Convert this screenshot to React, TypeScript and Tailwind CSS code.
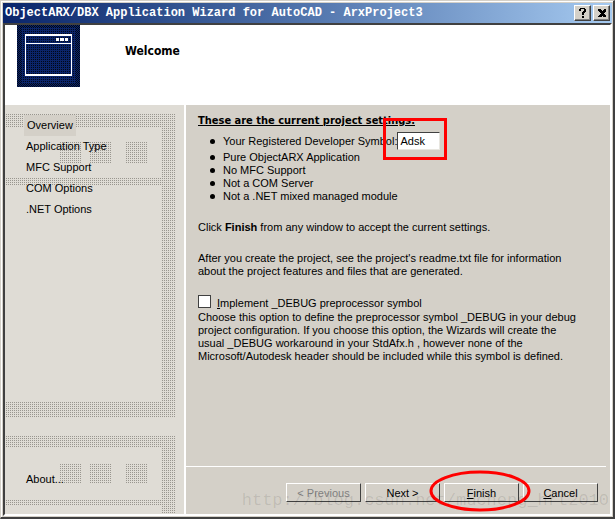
import * as React from 'react'

const NAV_ITEMS = ['Overview', 'Application Type', 'MFC Support', 'COM Options', '.NET Options']

const SETTINGS = [
  'Pure ObjectARX Application',
  'No MFC Support',
  'Not a COM Server',
  'Not a .NET mixed managed module',
]

const BUTTON = 'h-[19px] w-[75px] border border-t-white border-l-white border-r-[#404040] border-b-[#404040] bg-[#d4d0c8] text-center leading-4'
const CAPTION_BUTTON = 'flex h-4 w-[17px] items-center justify-center border border-t-white border-l-white border-r-[#404040] border-b-[#404040] bg-[#d4d0c8] text-black shadow-[inset_-1px_-1px_0_#808080]'

// Dotted window outlines behind the navigation
function DottedBackdrop() {
  return (
    <svg className="absolute inset-0 h-full w-full" aria-hidden="true">
      <defs>
        <pattern id="dots" width="2" height="2" patternUnits="userSpaceOnUse">
          <rect x="1" y="1" width="1" height="1" fill="#99968f" />
        </pattern>
      </defs>
      <g fill="url(#dots)">
        <rect x="1" y="9" width="170" height="13" />
        <rect x="1" y="73" width="156" height="8" />
        <rect x="157" y="22" width="14" height="283" />
        <rect x="55" y="37" width="21" height="21" />
        <rect x="85" y="37" width="21" height="21" />
        <rect x="121" y="37" width="21" height="21" />
        <rect x="1" y="297" width="170" height="15" />
        <rect x="1" y="330" width="170" height="13" />
        <rect x="157" y="343" width="14" height="66" />
        <rect x="55" y="358" width="21" height="21" />
        <rect x="85" y="358" width="21" height="21" />
        <rect x="121" y="358" width="21" height="21" />
        <rect x="1" y="394" width="156" height="7" />
        <rect x="178" y="9" width="2" height="13" />
        <rect x="178" y="73" width="2" height="8" />
        <rect x="178" y="297" width="2" height="15" />
        <rect x="178" y="330" width="2" height="13" />
        <rect x="178" y="394" width="2" height="7" />
      </g>
    </svg>
  )
}

function TitleBar() {
  return (
    <div className="flex h-5 items-center gap-0.5 bg-linear-to-r from-[#0a246a] to-[#a6caf0] pr-0.5 pl-0.5">
      <h1 className="flex-1 font-['Liberation_Mono',monospace] text-xs leading-5 font-bold whitespace-nowrap text-white">
        ObjectARX/DBX Application Wizard for AutoCAD - ArxProject3
      </h1>
      <button type="button" aria-label="Help" className={CAPTION_BUTTON}>
        <svg width="7" height="10" viewBox="0 0 7 10" shapeRendering="crispEdges">
          <path d="M1 0h5v1h1v3h-1v1h-1v2h-2v-3h1v-1h1v-2h-3v2h-2v-2h1zM3 8h2v2h-2z" />
        </svg>
      </button>
      <button type="button" aria-label="Close" className={CAPTION_BUTTON}>
        <svg width="8" height="8" viewBox="0 0 8 8" shapeRendering="crispEdges">
          <path d="M0 0h2v1h1v1h2v-1h1v-1h2v1h-1v1h-1v1h-1v2h1v1h1v1h1v1h-2v-1h-1v-1h-2v1h-1v1h-2v-1h1v-1h1v-1h1v-2h-1v-1h-1v-1h-1z" stroke="#000" strokeWidth="1" />
        </svg>
      </button>
    </div>
  )
}

function WizardLogo() {
  return (
    <svg width="63" height="62" viewBox="0 0 63 62" shapeRendering="crispEdges" aria-hidden="true">
      <defs>
        <pattern id="edge" width="2" height="2" patternUnits="userSpaceOnUse">
          <rect width="2" height="2" fill="#0a246a" />
          <path d="M0 0h1v1h-1zM1 1h1v1h-1z" fill="#020817" />
        </pattern>
        <pattern id="fill" width="2" height="2" patternUnits="userSpaceOnUse">
          <rect width="2" height="2" fill="#0a246a" />
          <path d="M0 0h1v1h-1z" fill="#020817" />
        </pattern>
      </defs>
      <rect width="63" height="62" fill="url(#edge)" />
      <rect x="4" y="3" width="55" height="55" fill="url(#fill)" />
      <path d="M8 9h47v42h-47zM9 11v7h45v-7zM9 19v30h45v-30z" fill="#fff" fillRule="evenodd" />
      <path d="M39 13h3v3h-3zM43 13h4v3h-4zM48 13h3v3h-3z" fill="#fff" />
    </svg>
  )
}

export default function App() {
  const [page, setPage] = React.useState('Overview')
  const [symbol, setSymbol] = React.useState('Adsk')
  const [debug, setDebug] = React.useState(false)

  return (
    <div className="relative flex min-h-screen flex-col border-t border-r-2 border-b-2 border-l border-t-[#d4d0c8] border-r-[#404040] border-b-[#404040] border-l-[#d4d0c8] bg-[#d4d0c8] font-['Liberation_Sans',Arial,sans-serif] text-[11px] leading-[13px] text-black">
      <div className="flex flex-1 flex-col border-t border-l border-white p-px">
        <TitleBar />
        <div className="flex flex-1 flex-col border-2 border-t-[#404040] border-r-white border-b-white border-l-[#404040]">
          <header className="flex h-20 bg-white pl-3">
            <WizardLogo />
            <h2 className="pt-[18px] pl-[45px] font-['DejaVu_Sans_Condensed','DejaVu_Sans',sans-serif] text-xs leading-4 font-bold">
              Welcome
            </h2>
          </header>

          <div className="flex flex-1">
            <nav className="relative flex w-[181px] shrink-0 flex-col border-r-2 border-white bg-[#dfdcd5]">
              <DottedBackdrop />
              <div className="relative flex flex-1 flex-col items-start pt-[10px] pl-[19px]">
                {NAV_ITEMS.map((item) => (
                  <button
                    key={item}
                    type="button"
                    onClick={() => setPage(item)}
                    className={`h-[21px] ${page === item ? 'bg-[#d4d0c8] px-[3px]' : 'px-0.5'}`}
                  >
                    {item}
                  </button>
                ))}
                <button type="button" className="mt-auto mb-7 px-0.5">About...</button>
              </div>
            </nav>

            <div className="flex flex-1 flex-col">
              <main className="flex-1 pt-[9px] pr-7 pl-3">
                <h3 className="font-['DejaVu_Sans_Condensed','DejaVu_Sans',sans-serif] leading-[14px] font-bold underline">
                  These are the current project settings.
                </h3>
                <ul className="pt-1">
                  <li className="flex items-center pb-px">
                    <span className="mr-2 ml-3 size-[5px] rounded-full bg-black" />
                    <label htmlFor="symbol">Your Registered Developer Symbol:</label>
                    <span className="relative flex">
                      <input
                        id="symbol"
                        value={symbol}
                        onChange={(e) => setSymbol(e.target.value)}
                        className="h-[18px] w-[43px] border border-t-[#404040] border-r-[#e8e6e0] border-b-[#e8e6e0] border-l-[#404040] bg-white px-0.5"
                      />
                      <span className="pointer-events-none absolute -top-3.5 -right-[7px] -bottom-2.5 -left-3.5 border-3 border-[#f00]" />
                    </span>
                  </li>
                  {SETTINGS.map((s) => (
                    <li key={s} className="flex items-center">
                      <span className="mr-2 ml-3 size-[5px] rounded-full bg-black" />
                      {s}
                    </li>
                  ))}
                </ul>
                <p className="pt-[18px]">
                  Click <b>Finish</b> from any window to accept the current settings.
                </p>
                <p className="pt-[18px]">
                  After you create the project, see the project's readme.txt file for information about the project
                  features and files that are generated.
                </p>
                <label className="flex items-end gap-[6px] pt-[17px]">
                  <input
                    type="checkbox"
                    checked={debug}
                    onChange={(e) => setDebug(e.target.checked)}
                    className="mb-0.5 size-[13px] appearance-none border border-[#404040] bg-white checked:bg-[#404040]"
                  />
                  <span><u>I</u>mplement _DEBUG preprocessor symbol</span>
                </label>
                <p className="pt-px">
                  Choose this option to define the preprocessor symbol _DEBUG in your debug project configuration. If
                  you choose this option, the Wizards will create the usual _DEBUG workaround in your StdAfx.h , however
                  none of the Microsoft/Autodesk header should be included while this symbol is defined.
                </p>
              </main>

              <footer className="mr-1 flex h-[48px] justify-end gap-1 border-t border-white pt-4 pr-2">
                <button type="button" disabled className={`${BUTTON} text-[#808080]`}>&lt; Previous</button>
                <button type="button" className={BUTTON}>Next &gt;</button>
                <button type="button" className={`relative ${BUTTON}`}>
                  <u>F</u>inish
                  <svg className="pointer-events-none absolute -top-3.5 -left-4 h-[42px] w-[102px]" viewBox="0 0 102 42" aria-hidden="true">
                    <ellipse cx="51" cy="21" rx="49" ry="19" fill="none" stroke="#f00" strokeWidth="3" />
                  </svg>
                </button>
                <button type="button" className={BUTTON}><u>C</u>ancel</button>
              </footer>
            </div>
          </div>
        </div>
      </div>
      <span className="pointer-events-none absolute right-1 bottom-1.5 font-['Liberation_Mono',monospace] text-[17px] leading-5 text-black/10">
        http://blog.csdn.net/mucheng_hrt2010
      </span>
    </div>
  )
}
